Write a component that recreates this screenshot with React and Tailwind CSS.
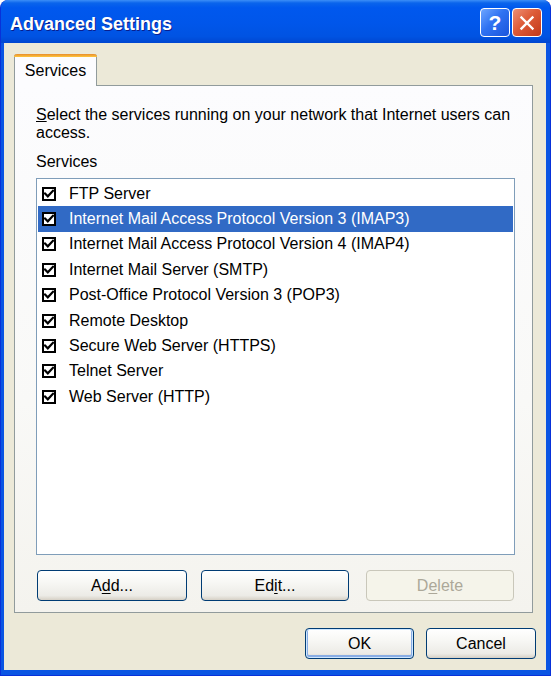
import React from "react";

const services = [
  "FTP Server",
  "Internet Mail Access Protocol Version 3 (IMAP3)",
  "Internet Mail Access Protocol Version 4 (IMAP4)",
  "Internet Mail Server (SMTP)",
  "Post-Office Protocol Version 3 (POP3)",
  "Remote Desktop",
  "Secure Web Server (HTTPS)",
  "Telnet Server",
  "Web Server (HTTP)",
];

function Check() {
  return (
    <div className="w-[14px] h-[14px] border-2 border-black bg-white flex items-center justify-center shrink-0">
      <svg width="10" height="10" viewBox="0 0 10 10">
        <path d="M1 4.5 L3.8 7.3 L9 1.8" fill="none" stroke="black" strokeWidth="2.2" strokeLinecap="square" />
      </svg>
    </div>
  );
}

function XPButton({ children, w, disabled, isDefault }) {
  return (
    <div
      className={
        "h-[31px] rounded-[4px] border flex items-center justify-center text-[16px] " +
        w +
        (disabled
          ? " border-[#C9C7BA] text-[#ACA899] bg-[#F5F4EA]"
          : " border-[#003C74] text-black bg-[linear-gradient(to_bottom,#FFFFFF_0%,#F7F7F4_40%,#ECEBE6_85%,#D6D0C5_100%)]") +
        (isDefault ? " shadow-[inset_0_0_0_1px_#CEE7FF,inset_0_-1px_0_2px_#89ADE4]" : "")
      }
    >
      {children}
    </div>
  );
}

export default function App() {
  return (
    <div
      className="w-[551px] h-[676px] flex flex-col rounded-t-[8px] bg-[#0A55E3] border-x border-b border-[#0831D9] overflow-hidden"
      style={{ fontFamily: '"Liberation Sans", Arial, sans-serif' }}
    >
      {/* Title bar */}
      <div className="h-[43px] shrink-0 flex items-center pl-[9px] pr-[8px] bg-[linear-gradient(to_bottom,#3C8EF7_0%,#0A64EC_7%,#0058EE_18%,#0056EA_55%,#0053E2_85%,#0046D0_100%)]">
        <div className="text-white font-bold text-[18px] [text-shadow:1px_1px_0_#0A1E8C] flex-1 pt-[5px]">
          Advanced Settings
        </div>
        <div className="flex gap-[2px] pt-[2px]">
          <div className="w-[30px] h-[29px] rounded-[4px] border border-white flex items-center justify-center bg-[linear-gradient(135deg,#6EA6FF_0%,#2F72F2_45%,#1A55DC_100%)] text-white font-bold text-[21px] leading-none">
            ?
          </div>
          <div className="w-[30px] h-[29px] rounded-[4px] border border-white flex items-center justify-center bg-[linear-gradient(135deg,#EE8F75_0%,#DD5B38_45%,#C2391A_100%)]">
            <svg width="16" height="16" viewBox="0 0 16 16">
              <path d="M2.5 2.5 L13.5 13.5 M13.5 2.5 L2.5 13.5" stroke="white" strokeWidth="2.4" strokeLinecap="square" />
            </svg>
          </div>
        </div>
      </div>

      {/* Body */}
      <div className="flex-1 bg-[#ECE9D8] ml-[3px] mr-[4px] mb-[5px] pl-[10px] pr-[13px] pt-[11px] flex flex-col text-[16px] text-black">
        {/* Tab strip */}
        <div className="flex h-[31px] relative z-10">
          <div className="w-[83px] h-[32px] bg-[#FCFCFE] border-x border-[#919B9C] rounded-t-[3px] flex flex-col">
            <div className="h-[3px] rounded-t-[3px] bg-[linear-gradient(to_bottom,#E68B2C_0%,#FFC73C_100%)] -mx-px"></div>
            <div className="flex-1 flex items-center justify-center pb-[2px]">Services</div>
          </div>
        </div>

        {/* Panel */}
        <div className="h-[528px] border border-[#919B9C] bg-[linear-gradient(to_bottom,#FCFCFE_0%,#F9F9F7_60%,#F4F3EE_100%)] pl-[21px] pr-[17px] flex flex-col">
          <div className="mt-[20px] leading-[18px]">
            <u className="underline-offset-1">S</u>elect the services running on your network that Internet users can access.
          </div>
          <div className="mt-[11px] leading-[18px]">Services</div>
          <div className="mt-[7px] h-[377px] border border-[#7F9DB9] bg-white pt-[2px] px-px">
            {services.map((s, i) => (
              <div
                key={s}
                className={
                  "h-[25.4px] flex items-center pl-[4px] gap-[13px] " +
                  (i === 1 ? "bg-[#316AC5] text-white" : "")
                }
              >
                <Check />
                <span>{s}</span>
              </div>
            ))}
          </div>
          <div className="mt-[15px] flex">
            <XPButton w="w-[150px] ml-px">
              <span>A<u className="underline-offset-2">d</u>d...</span>
            </XPButton>
            <XPButton w="w-[148px] ml-[14px]">
              <span>Ed<u className="underline-offset-2">i</u>t...</span>
            </XPButton>
            <XPButton w="w-[148px] ml-[17px]" disabled>
              <span>D<u className="underline-offset-2">e</u>lete</span>
            </XPButton>
          </div>
        </div>

        {/* Dialog buttons */}
        <div className="mt-[15px] flex justify-end gap-[12px] -mr-[3px]">
          <XPButton w="w-[109px]" isDefault>
            OK
          </XPButton>
          <XPButton w="w-[110px]">Cancel</XPButton>
        </div>
      </div>
    </div>
  );
}
